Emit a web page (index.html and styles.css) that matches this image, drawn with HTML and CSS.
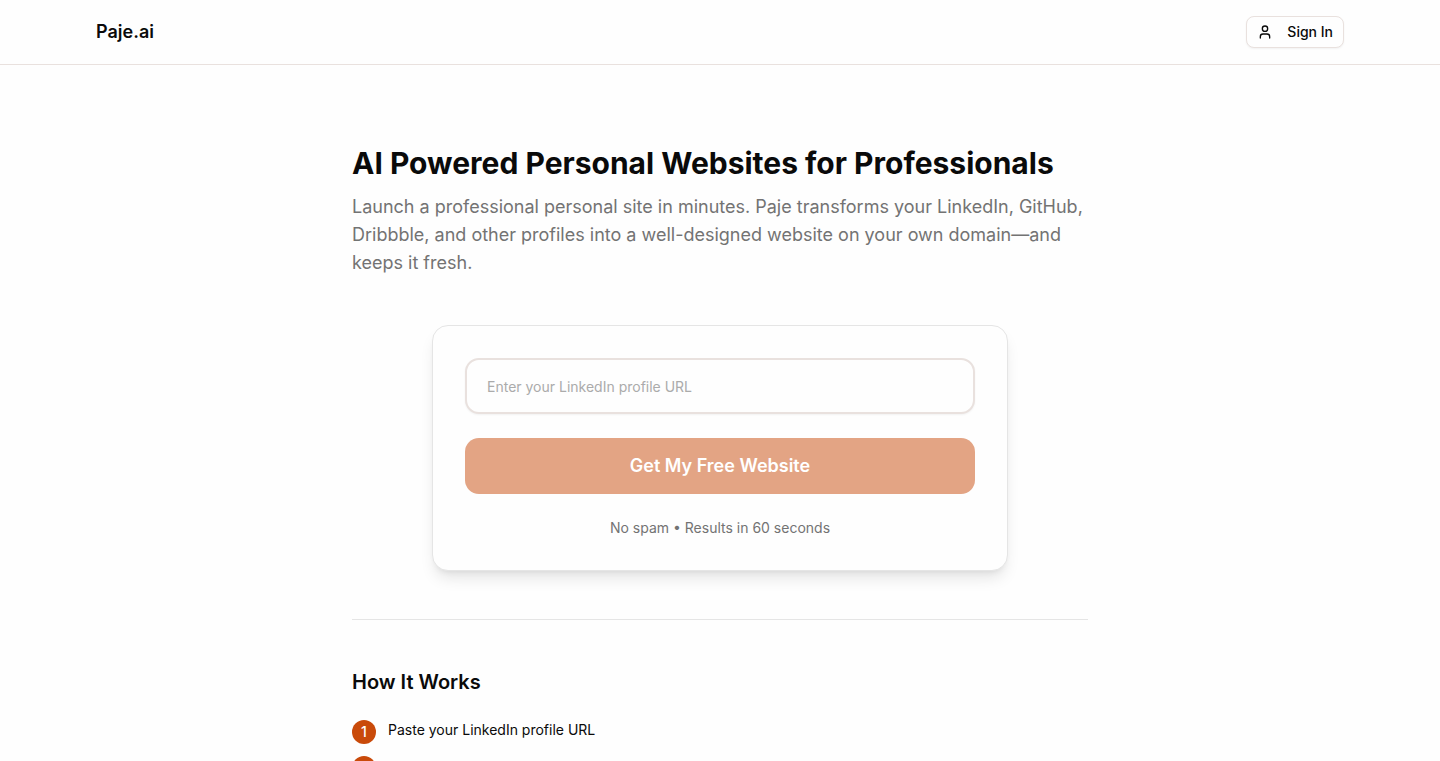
FILE: index.html
```
<!DOCTYPE html>
<html lang="en">
<head>
    <meta charset="UTF-8">
    <meta name="viewport" content="width=device-width, initial-scale=1.0">
    <title>Paje.ai</title>
    <link rel="stylesheet" href="styles.css">
</head>
<body>
    <header class="site-header">
        <div class="header-inner">
            <a href="/" class="logo">Paje.ai</a>
            <button type="button" class="sign-in">
                <svg class="user-icon" viewBox="0 0 24 24" aria-hidden="true">
                    <path d="M19 21v-2a4 4 0 0 0-4-4H9a4 4 0 0 0-4 4v2"/>
                    <circle cx="12" cy="7" r="4"/>
                </svg>
                Sign In
            </button>
        </div>
    </header>

    <main class="page">
        <h1>AI Powered Personal Websites for Professionals</h1>
        <p class="intro">Launch a professional personal site in minutes. Paje transforms your LinkedIn, GitHub, Dribbble, and other profiles into a well-designed website on your own domain—and keeps it fresh.</p>

        <form class="signup-card">
            <input type="url" name="profile" class="url-input" placeholder="Enter your LinkedIn profile URL" aria-label="LinkedIn profile URL">
            <button type="submit" class="submit-button" disabled>Get My Free Website</button>
            <p class="note">No spam • Results in 60 seconds</p>
        </form>

        <section class="how">
            <h2>How It Works</h2>
            <ol class="steps">
                <li><span class="step-number">1</span><span>Paste your LinkedIn profile URL</span></li>
                <li><span class="step-number"></span></li>
            </ol>
        </section>
    </main>
</body>
</html>
```
FILE: styles.css
```
* {
    box-sizing: border-box;
}

body {
    margin: 0;
    font-family: Inter, "Liberation Sans", sans-serif;
    font-size: 14px;
    line-height: 20px;
    color: #0a0a0a;
    background-color: #fefefe;
}

h1, h2, p {
    margin: 0;
}

/* Header */
.site-header {
    border-bottom: 1px solid #e9e1de;
}

.header-inner {
    display: flex;
    align-items: center;
    justify-content: space-between;
    max-width: 1280px;
    margin: 0 auto;
    padding: 16px;
}

.logo {
    font-size: 18px;
    line-height: 28px;
    font-weight: 600;
    color: inherit;
    text-decoration: none;
}

.sign-in {
    display: flex;
    align-items: center;
    gap: 14px;
    height: 32px;
    padding: 0 10px;
    font: inherit;
    font-weight: 500;
    color: inherit;
    background-color: #fefefe;
    border: 1px solid #e9e1de;
    border-radius: 8px;
    box-shadow: 0 1px 2px rgba(0, 0, 0, 0.05);
    cursor: pointer;
}

.user-icon {
    width: 16px;
    height: 16px;
    fill: none;
    stroke: currentColor;
    stroke-width: 2;
    stroke-linecap: round;
    stroke-linejoin: round;
}

/* Main column */
.page {
    max-width: 768px;
    margin: 0 auto;
    padding: 80px 16px;
}

h1 {
    margin-bottom: 12px;
    font-size: 30px;
    line-height: 36px;
    font-weight: 700;
}

.intro {
    font-size: 18px;
    line-height: 28px;
    color: #737373;
}

/* Signup card */
.signup-card {
    display: flex;
    flex-direction: column;
    gap: 24px;
    max-width: 576px;
    margin: 48px auto;
    padding: 32px;
    background-color: #fefefe;
    border: 1px solid #e5e5e5;
    border-radius: 16px;
    box-shadow: 0 10px 15px -3px rgba(0, 0, 0, 0.1), 0 4px 6px -4px rgba(0, 0, 0, 0.1);
}

.url-input {
    width: 100%;
    height: 56px;
    padding: 0 20px;
    font: inherit;
    color: inherit;
    background-color: #fefefe;
    border: 2px solid #e9e1de;
    border-radius: 14px;
    box-shadow: 0 1px 2px rgba(0, 0, 0, 0.05);
}

.url-input::placeholder {
    color: #ababab;
}

.submit-button {
    height: 56px;
    font: inherit;
    font-size: 18px;
    font-weight: 600;
    color: #fff;
    background-color: #e3a484;
    border: none;
    border-radius: 14px;
}

.note {
    text-align: center;
    color: #737373;
}

/* How it works */
.how {
    padding-top: 48px;
    border-top: 1px solid #e5e5e5;
}

h2 {
    margin-bottom: 24px;
    font-size: 20px;
    line-height: 28px;
    font-weight: 600;
}

.steps {
    display: grid;
    gap: 12px;
    margin: 0;
    padding: 0;
    list-style: none;
}

.steps li {
    display: flex;
    align-items: flex-start;
    gap: 12px;
}

.step-number {
    display: flex;
    align-items: center;
    justify-content: center;
    width: 24px;
    height: 24px;
    font-weight: 500;
    color: #fff;
    background-color: #c94a0a;
    border-radius: 50%;
}
```
